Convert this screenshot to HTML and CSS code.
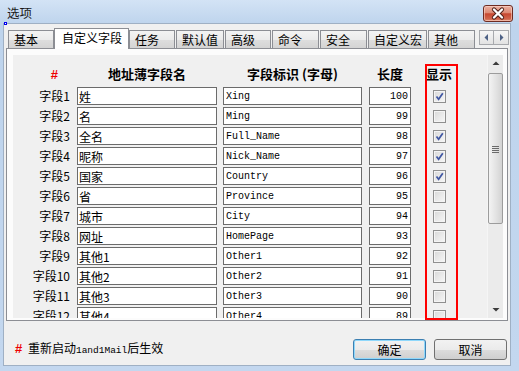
FILE: index.html
```html
<!DOCTYPE html>
<html>
<head>
<meta charset="utf-8">
<link rel="stylesheet" href="styles.css">
</head>
<body>
<div class="window">
  <div class="titlebar">
    <span class="title">选项</span>
    <div class="close">
      <svg width="28" height="15" viewBox="0 0 28 15"><path d="M10 3.5 L18 11.5 M18 3.5 L10 11.5" stroke="#4a1d16" stroke-width="4.2" stroke-linecap="round"/><path d="M10 3.5 L18 11.5 M18 3.5 L10 11.5" stroke="#fff" stroke-width="2.4" stroke-linecap="round"/></svg>
    </div>
  </div>
  <div class="focus-dot"></div>
  <div class="client">
    <div class="tabs">
      <div class="tab w46">基本</div>
      <div class="tab active">自定义字段</div>
      <div class="tab w46">任务</div>
      <div class="tab w48 gap">默认值</div>
      <div class="tab w46 gap">高级</div>
      <div class="tab w47 gap">命令</div>
      <div class="tab w47 gap">安全</div>
      <div class="tab w59 gap">自定义宏</div>
      <div class="tab w47 gap">其他</div>
      <div class="tab-arrows">
        <div class="arrow-btn"><svg width="13" height="13" viewBox="0 0 13 13"><path d="M8 3 L8 10 L4.5 6.5 Z" fill="#4d6185"/></svg></div>
        <div class="arrow-btn"><svg width="13" height="13" viewBox="0 0 13 13"><path d="M5 3 L5 10 L8.5 6.5 Z" fill="#4d6185"/></svg></div>
      </div>
    </div>
    <div class="panel">
      <div class="scroller">
        <div class="list">
          <div class="row head">
            <div class="c-label"><span class="hash">#</span></div>
            <div class="c-name">地址薄字段名</div>
            <div class="c-ident">字段标识 (字母)</div>
            <div class="c-len">长度</div>
            <div class="c-show">显示</div>
          </div>
          <div class="row"><div class="c-label">字段1</div><input class="c-name field" value="姓"><input class="c-ident field mono" value="Xing"><input class="c-len field mono num" value="100"><span class="cb checked"><svg width="11" height="11" viewBox="0 0 11 11"><path d="M2.5 5.5 L4.6 8.2 L8.8 2.2" stroke="#3f56a2" stroke-width="1.7" fill="none"/></svg></span></div>
          <div class="row"><div class="c-label">字段2</div><input class="c-name field" value="名"><input class="c-ident field mono" value="Ming"><input class="c-len field mono num" value="99"><span class="cb"></span></div>
          <div class="row"><div class="c-label">字段3</div><input class="c-name field" value="全名"><input class="c-ident field mono" value="Full_Name"><input class="c-len field mono num" value="98"><span class="cb checked"><svg width="11" height="11" viewBox="0 0 11 11"><path d="M2.5 5.5 L4.6 8.2 L8.8 2.2" stroke="#3f56a2" stroke-width="1.7" fill="none"/></svg></span></div>
          <div class="row"><div class="c-label">字段4</div><input class="c-name field" value="昵称"><input class="c-ident field mono" value="Nick_Name"><input class="c-len field mono num" value="97"><span class="cb checked"><svg width="11" height="11" viewBox="0 0 11 11"><path d="M2.5 5.5 L4.6 8.2 L8.8 2.2" stroke="#3f56a2" stroke-width="1.7" fill="none"/></svg></span></div>
          <div class="row"><div class="c-label">字段5</div><input class="c-name field" value="国家"><input class="c-ident field mono" value="Country"><input class="c-len field mono num" value="96"><span class="cb checked"><svg width="11" height="11" viewBox="0 0 11 11"><path d="M2.5 5.5 L4.6 8.2 L8.8 2.2" stroke="#3f56a2" stroke-width="1.7" fill="none"/></svg></span></div>
          <div class="row"><div class="c-label">字段6</div><input class="c-name field" value="省"><input class="c-ident field mono" value="Province"><input class="c-len field mono num" value="95"><span class="cb"></span></div>
          <div class="row"><div class="c-label">字段7</div><input class="c-name field" value="城市"><input class="c-ident field mono" value="City"><input class="c-len field mono num" value="94"><span class="cb"></span></div>
          <div class="row"><div class="c-label">字段8</div><input class="c-name field" value="网址"><input class="c-ident field mono" value="HomePage"><input class="c-len field mono num" value="93"><span class="cb"></span></div>
          <div class="row"><div class="c-label">字段9</div><input class="c-name field" value="其他1"><input class="c-ident field mono" value="Other1"><input class="c-len field mono num" value="92"><span class="cb"></span></div>
          <div class="row"><div class="c-label">字段10</div><input class="c-name field" value="其他2"><input class="c-ident field mono" value="Other2"><input class="c-len field mono num" value="91"><span class="cb"></span></div>
          <div class="row"><div class="c-label">字段11</div><input class="c-name field" value="其他3"><input class="c-ident field mono" value="Other3"><input class="c-len field mono num" value="90"><span class="cb"></span></div>
          <div class="row"><div class="c-label">字段12</div><input class="c-name field" value="其他4"><input class="c-ident field mono" value="Other4"><input class="c-len field mono num" value="89"><span class="cb"></span></div>
        </div>
        <div class="vscroll">
          <div class="sb-arrow"><svg width="16" height="17" viewBox="0 0 16 17"><path d="M4.5 10 L11.5 10 L8 6.5 Z" fill="#3c3c3c"/></svg></div>
          <div class="sb-track">
            <div class="sb-thumb">
              <svg width="8" height="8" viewBox="0 0 8 8"><path d="M0 1.5 H7 M0 3.5 H7 M0 5.5 H7 M0 7.5 H7" stroke="#6a6a6a" stroke-width="1"/></svg>
            </div>
          </div>
          <div class="sb-arrow"><svg width="16" height="17" viewBox="0 0 16 17"><path d="M4.5 7 L11.5 7 L8 10.5 Z" fill="#3c3c3c"/></svg></div>
        </div>
      </div>
      <div class="redbox"></div>
    </div>
    <div class="footer">
      <div class="note"><span class="hash">#</span> 重新启动<span class="mono small">1and1Mail</span>后生效</div>
      <div class="buttons">
        <div class="btn default">确定</div>
        <div class="btn">取消</div>
      </div>
    </div>
  </div>
</div>
</body>
</html>
```
FILE: styles.css
```css
* { box-sizing: border-box; }
body {
  margin: 0;
  font-family: "Noto Sans CJK SC", "Liberation Sans", sans-serif;
  font-size: 12px;
  color: #000;
}
.window {
  position: relative;
  width: 519px;
  height: 371px;
  background: linear-gradient(#d3e3f5 0, #bed4ed 24px, #c3d7ef 100%);
  display: flex;
  flex-direction: column;
}
.titlebar {
  height: 23px;
  display: flex;
  justify-content: space-between;
  align-items: flex-start;
  padding: 0 6px 0 7px;
}
.title {
  line-height: 14px;
  margin-top: 6px;
  font-size: 12.5px;
  color: #1a1a1a;
}
.close {
  margin-top: 5px;
  width: 30px;
  height: 17px;
  border: 1px solid #6d2b22;
  border-radius: 3px;
  background: linear-gradient(#eab0a2 0, #dd8a74 45%, #c7472f 52%, #d0644b 85%, #de8d70 100%);
  box-shadow: inset 0 0 0 1px rgba(255, 220, 210, 0.55);
  display: flex;
  align-items: center;
  justify-content: center;
}
.close svg { display: block; }
.focus-dot {
  position: absolute;
  left: 4px;
  top: 22px;
  width: 3px;
  height: 3px;
  border: 1px solid #0000ee;
  background: #fff;
}
.client {
  flex: 1;
  margin: 0 8px 5px 3px;
  background: #f0f0f0;
  border: 1px solid #9fb0c4;
  display: flex;
  flex-direction: column;
}
.tabs {
  display: flex;
  align-items: flex-end;
  height: 24px;
  padding: 4px 0 0 4px;
}
.tab {
  height: 18px;
  border: 1px solid #8c8e94;
  border-bottom: none;
  background: linear-gradient(#f3f3f3 0, #ebebeb 50%, #dddddd 55%, #d4d4d4 100%);
  padding-left: 5px;
  line-height: 17px;
  white-space: nowrap;
  overflow: hidden;
}
.tab.gap { margin-left: 1px; }
.w46 { width: 46px; }
.w47 { width: 47px; }
.w48 { width: 48px; }
.w59 { width: 59px; }
.tab.active {
  position: relative;
  z-index: 2;
  width: 75px;
  height: 21px;
  margin-bottom: -1px;
  background: #fff;
  padding-left: 7px;
  line-height: 18px;
}
.tab-arrows {
  display: flex;
  align-self: flex-start;
  margin: 2px 0 0 4px;
}
.arrow-btn {
  width: 15px;
  height: 15px;
  border: 1px solid #a7a9ad;
  background: linear-gradient(#f6f6f6, #e2e2e2);
  display: flex;
  align-items: center;
  justify-content: center;
}
.arrow-btn + .arrow-btn { border-left: none; }
.arrow-btn svg { display: block; }
.panel {
  position: relative;
  margin: 0 2px 0 2px;
  height: 273px;
  border: 1px solid #8c8e94;
  background: #fcfcfc;
  padding: 6px 4px 2px 6px;
}
.scroller {
  display: flex;
  height: 263px;
  overflow: hidden;
}
.list {
  flex: 1;
  background: #f0f0f0;
  padding-top: 9px;
  overflow: hidden;
}
.row {
  display: flex;
  align-items: center;
  height: 20px;
}
.row.head {
  height: 22px;
  font-weight: 700;
  font-size: 13px;
  text-align: center;
  line-height: 16px;
  padding-bottom: 2px;
}
.c-label {
  width: 58px;
  text-align: right;
  padding-right: 1px;
  white-space: nowrap;
  line-height: 16px;
}
.row.head .c-label { padding-right: 13px; }
.hash {
  color: #ee0000;
  font-weight: 700;
  font-family: "Liberation Sans", sans-serif;
}
.c-name { width: 140px; margin-left: 6px; }
.c-ident { width: 139px; margin-left: 6px; white-space: nowrap; }
.c-len { width: 42px; margin-left: 7px; }
.c-show { width: 30px; margin-left: 13px; }
.field {
  height: 18px;
  border: 1px solid #6b6b6b;
  background: #fff;
  padding: 0 1px;
  margin-top: 0;
  margin-bottom: 0;
  font-family: "Noto Sans CJK SC", sans-serif;
  font-size: 12px;
  line-height: 16px;
  color: #000;
  outline: none;
}
.mono {
  font-family: "Liberation Mono", "DejaVu Sans Mono", monospace;
  font-size: 10px;
}
.field.mono {
  font-family: "Liberation Mono", "DejaVu Sans Mono", monospace;
  font-size: 10px;
  padding-left: 2px;
  line-height: 16px;
  color: #000;
}
.num { text-align: right; padding-right: 2px; }
.cb {
  width: 13px;
  height: 13px;
  margin-left: 22px;
  border: 1px solid #8f8f8f;
  background: linear-gradient(135deg, #d8d8d8, #f7f7f7);
  box-shadow: inset 0 0 0 1px #f4f4f4;
  display: flex;
  align-items: center;
  justify-content: center;
}
.cb svg { display: block; }
.vscroll {
  width: 16px;
  display: flex;
  flex-direction: column;
  background: #ebebeb;
  border-left: 1px solid #f5f5f5;
}
.sb-arrow { height: 17px; }
.sb-arrow svg { display: block; }
.sb-track {
  flex: 1;
  padding-top: 1px;
}
.sb-thumb {
  height: 151px;
  border: 1px solid #9c9c9c;
  border-radius: 2px;
  background: linear-gradient(90deg, #f3f3f3, #e4e4e4 50%, #d3d3d3);
  display: flex;
  align-items: center;
  justify-content: center;
}
.sb-thumb svg { display: block; }
.redbox {
  position: absolute;
  left: 418px;
  top: 15px;
  width: 33px;
  height: 256px;
  border: 2px solid #ff0000;
  pointer-events: none;
}
.footer {
  display: flex;
  justify-content: space-between;
  align-items: center;
  padding: 16px 3px 0 11px;
}
.note {
  font-size: 12px;
  line-height: 21px;
  white-space: nowrap;
}
.note .hash { margin-right: 3px; font-size: 13px; }
.mono.small { font-size: 9.5px; }
.buttons { display: flex; gap: 8px; }
.btn {
  width: 73px;
  height: 21px;
  border: 1px solid #707070;
  border-radius: 3px;
  background: linear-gradient(#f2f2f2 0, #ebebeb 50%, #dddddd 51%, #cfcfcf 100%);
  text-align: center;
  line-height: 19px;
  font-size: 12px;
}
.btn.default {
  border-color: #3c7fb1;
  box-shadow: inset 0 0 0 1px #8fd8fb;
}
```
